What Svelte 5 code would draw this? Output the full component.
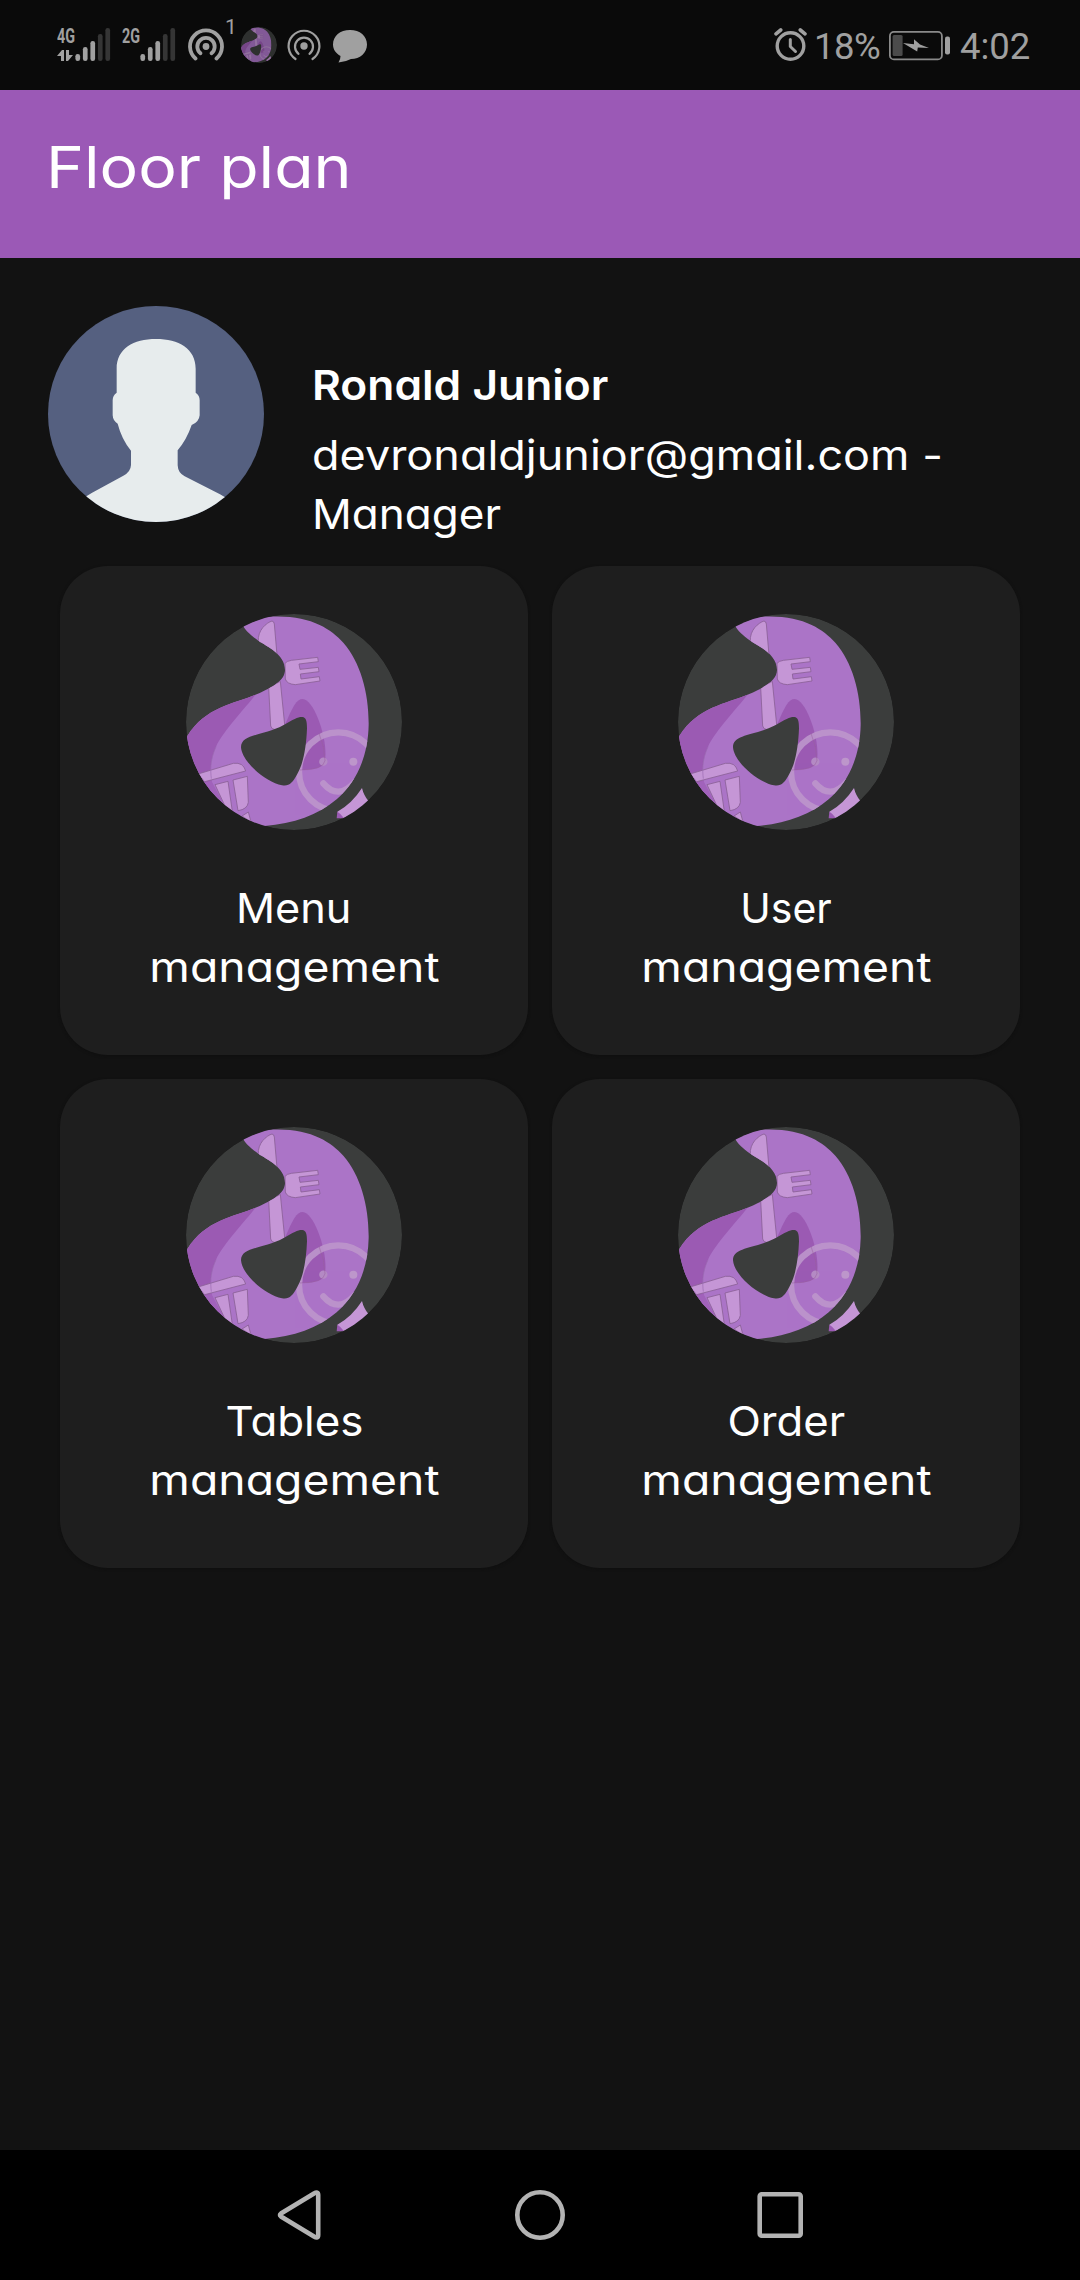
<script>
  const cards = ['Menu', 'User', 'Tables', 'Order'];
  const barHeights = [7, 14, 20, 27, 33];
</script>

{#snippet brand(id)}
  <svg class="brand" viewBox="48 42 648 648">
    <defs>
      <clipPath id="disc-{id}"><circle cx="372" cy="366" r="324" /></clipPath>
      <clipPath id="body-{id}">
        <path d="M221 80L210 30L300 50C420 44 482 86 520 128C572 188 597 280 596 375C594 470 560 545 500 598C445 645 370 672 284 678L150 700L20 560L52 408C108 320 190 313 260 283C312 260 345 240 345 210C345 163 292 140 265 122C242 106 226 90 221 80Z" />
      </clipPath>
    </defs>
    <g clip-path="url(#disc-{id})">
      <circle cx="372" cy="366" r="324" fill="#3b3d3c" />
      <g clip-path="url(#body-{id})">
        <rect x="40" y="30" width="660" height="670" fill="#ab74c7" />
        <path d="M40 400L52 280L256 285C225 325 158 395 138 440C120 480 121 510 124 536L130 600L40 600Z" fill="#9b5ab3" />
        <path d="M345 374C368 320 380 297 398 297C432 297 475 420 465 480C461 502 440 510 385 510Z" fill="#9b5ab3" />
        <g fill="#c596d6" stroke="#8a6096" stroke-width="2.5">
          <path d="M265 125C262 90 290 68 306 63Q312 64 313 72L321 165Z" />
          <path d="M296 262L331 244L344 374Q325 390 316 389Q304 388 302 378Z" />
          <path d="M345 190Q350 183 364 181L443 172L445 185L387 192L390 208L445 202L447 215L391 222L393 237L448 230L450 243L376 254Q350 252 346 237Z" />
          <path d="M84 522L190 490Q220 486 227 513L104 545Z" />
          <path d="M189 540L232 529L235 607Q232 628 204 632Z" />
          <path d="M216 648L235 636L243 666Z" />
        </g>
        <path d="M138 440C120 480 121 510 124 536" fill="none" stroke="#9a6ab0" stroke-width="2" />
        <path d="M104 548L124 542L165 618L120 590Z" fill="#a162bb" />
        <path d="M135 554L174 544L187 634L165 618Z" fill="#c596d6" stroke="#8a6096" stroke-width="2.5" />
        <g fill="none" stroke="#bd96cb" stroke-width="19" stroke-linecap="round" opacity=".9">
          <circle cx="505" cy="515" r="118" />
          <path d="M460 550Q505 602 554 546" />
        </g>
        <circle cx="460" cy="485" r="12.5" fill="#b48ac4" />
        <circle cx="550" cy="485" r="12" fill="#bd96cb" />
        <path d="M447 400Q464 440 465 482Q461 510 390 510" fill="none" stroke="#98609f" stroke-width="1.5" />
      </g>
      <path d="M213 442C213 402 278 408 340 376C372 357 385 350 397 351C408 353 411 361 411 385C409 440 400 490 383 520C368 550 356 560 336 556C288 547 216 486 213 442Z" fill="#3b3d3c" />
      <path d="M502 635Q545 612 576 564Q581 586 596 604L540 665Q508 655 502 635Z" fill="#c596d6" />
      <path d="M502 635Q510 639 522 655L500 655Z" fill="#9b5ab3" />
    </g>
  </svg>
{/snippet}

{#snippet signal(label, arrows)}
  <svg class="signal" viewBox="0 0 54 40" width="54" height="40">
    <text x="0" y="19" textLength="18" lengthAdjust="spacingAndGlyphs">{label}</text>
    {#if arrows}
      <path d="M0 32L5 26H7V37H4V32ZM9 26H12V31H16L11 37H9Z" />
    {/if}
    {#each barHeights as h, i}
      <rect class:off={i > 2} x={18.4 + i * 7.5} y={37 - h} width="4.7" height={h} rx="2.2" />
    {/each}
  </svg>
{/snippet}

<div class="screen">
  <div class="status">
    {@render signal('4G', true)}
    <div class="second">{@render signal('2G', false)}</div>
    <svg class="cast" viewBox="0 0 48 48" width="48" height="48">
      <g fill="none" stroke="#a0a0a0" stroke-width="3.8" stroke-linecap="round">
        <path d="M7.5 42.5A16 16 0 1 1 28.5 42.5" />
        <path d="M12.5 37.3A8.7 8.7 0 1 1 23.5 37.3" />
      </g>
      <circle cx="18" cy="30.5" r="3.4" />
      <text x="37" y="18" font-size="21">1</text>
    </svg>
    <div class="mini">{@render brand('status')}</div>
    <svg class="cast-thin" viewBox="0 0 34 34" width="34" height="34">
      <g fill="none" stroke="#a0a0a0" stroke-width="2.2" stroke-linecap="round">
        <path d="M8.5 30A15.4 15.4 0 1 1 25.5 30" />
        <path d="M11.5 24.8A9 9 0 1 1 22.5 24.8" />
      </g>
      <circle cx="17" cy="17" r="3.7" />
    </svg>
    <svg class="bubble" viewBox="0 0 34 33" width="34" height="33">
      <path d="M17 0C27 0 34 6 34 14.5S27 29 18 29Q13 31.8 5.5 32.5Q7.5 29.5 7.5 26C3 23.5 0 19.5 0 14.5C0 6 7 0 17 0Z" />
    </svg>
    <div class="fill"></div>
    <svg class="alarm" viewBox="0 0 34 34" width="34" height="34">
      <g fill="none" stroke="#a0a0a0" stroke-linecap="round">
        <circle cx="16.5" cy="18" r="13.3" stroke-width="3.4" />
        <path d="M2 5.8L6.7 2M31 5.8L26.3 2" stroke-width="3.6" />
        <path d="M16.3 11.5V18.5L21.5 23.5" stroke-width="3" stroke-linejoin="round" />
      </g>
    </svg>
    <span class="level">18%</span>
    <svg class="battery" viewBox="0 0 62 30" width="62" height="30">
      <rect x=".9" y=".9" width="52" height="27.5" rx="4" fill="none" stroke="#8a8a8a" stroke-width="1.8" />
      <rect x="3.6" y="4" width="10" height="21" rx="1.5" fill="#4b4b4b" />
      <path d="M14 12L25 13.2V8.3L31 13.5L40 17L28.8 16.5L28.2 20.5Z" />
      <rect x="56" y="5.5" width="5" height="18" rx="2" />
    </svg>
    <span class="clock">4:02</span>
  </div>

  <header><h1>Floor plan</h1></header>

  <main>
    <section class="profile">
      <svg class="avatar" viewBox="54 47 648 648">
        <defs><clipPath id="avatar-disc"><circle cx="378" cy="371" r="324" /></clipPath></defs>
        <g clip-path="url(#avatar-disc)">
          <rect x="54" y="47" width="648" height="648" fill="#556080" />
          <path d="M260 235C260 175 310 146 378 146S497 175 497 235V307Q509 315 509 330V375Q507 396 485 404Q470 448 443 480V525Q444 548 464 558L570 612Q600 628 610 645V700H140V645Q150 628 185 608L280 556Q302 545 303 524V481Q275 447 263 400Q249 392 248 375V330Q248 315 260 307Z" fill="#e7eced" />
        </g>
      </svg>
      <div class="who">
        <p class="name">Ronald Junior</p>
        <p class="mail">devronaldjunior@gmail.com -</p>
        <p class="role">Manager</p>
      </div>
    </section>

    <section class="grid">
      {#each cards as card}
        <article>
          {@render brand(card)}
          <p class="label {card.toLowerCase()}">{card}</p>
          <p class="label mgmt">management</p>
        </article>
      {/each}
    </section>
  </main>

  <nav>
    <svg viewBox="0 0 60 60" width="60" height="60"><path d="M11 30.5Q9 29 11 27.5L44 7.5Q48.2 5 48.2 9V49Q48.2 53 44 50.5Z" /></svg>
    <svg viewBox="0 0 60 60" width="60" height="60"><circle cx="30" cy="29" r="22.7" /></svg>
    <svg viewBox="0 0 60 60" width="60" height="60"><rect x="9.7" y="8.3" width="41" height="41.4" rx="2" /></svg>
  </nav>
</div>

<style>
  :global(body) { background: #121212; }
  svg { display: block; flex: none; }
  p, h1 { margin: 0; font-weight: 400; white-space: nowrap; }
  .screen {
    width: 1080px;
    height: 2280px;
    display: flex;
    flex-direction: column;
    background: #121212;
    color: #fff;
    font-family: Inter, "Open Sans", sans-serif;
    font-feature-settings: "cv11";
  }
  .status {
    box-sizing: border-box;
    height: 90px;
    padding: 0 51px 0 57px;
    display: flex;
    align-items: flex-start;
    background: #0a0a0a;
    color: #a0a0a0;
    fill: #a0a0a0;
    font-family: Roboto, sans-serif;
    font-feature-settings: normal;
  }
  .signal { margin-top: 24px; }
  .signal text { font: 700 21px Roboto, sans-serif; }
  .off { fill: #353535; }
  .second { margin-left: 11px; }
  .cast { margin: 16px 0 0 12px; }
  .mini { width: 36px; height: 36px; margin: 27px 0 0 5px; opacity: .75; }
  .mini .brand { width: 36px; height: 36px; }
  .cast-thin { margin: 29px 0 0 10px; }
  .bubble { margin: 30px 0 0 12px; }
  .fill { flex: 1; }
  .alarm { margin-top: 28px; }
  .level, .clock { font-size: 36.5px; line-height: 44px; margin-top: 25px; white-space: nowrap; }
  .level { width: 65px; margin-left: 6px; letter-spacing: -.5px; }
  .battery { margin: 31px 0 0 10px; }
  .clock { width: 69px; margin-left: 9px; }

  header {
    height: 168px;
    box-sizing: border-box;
    padding: 32px 46px;
    background: #9b59b6;
  }
  h1 { font-size: 58px; line-height: 90px; }

  main { flex: 1; padding: 48px 48px 0; }
  .profile { display: flex; gap: 48px; height: 260px; }
  .avatar { width: 216px; height: 216px; }
  .who { padding-top: 50px; font-size: 41px; line-height: 59px; }
  .name { font-weight: 600; margin-bottom: 11px; }

  h1, .who p { width: fit-content; transform-origin: left; }
  h1 { transform: scaleX(1.11); }
  .name { transform: scaleX(1.08); }
  .mail { transform: scaleX(1.097); }
  .role { transform: scaleX(1.075); }
  .mgmt { transform: scaleX(1.13); }
  .menu { transform: scaleX(1.055); }
  .tables { transform: scaleX(1.07); }
  .order { transform: scaleX(1.065); }

  .grid {
    display: grid;
    grid-template-columns: 468px 468px;
    grid-auto-rows: 489px;
    gap: 24px;
    padding: 0 12px;
  }
  article {
    box-sizing: border-box;
    display: flex;
    flex-direction: column;
    align-items: center;
    padding-top: 48px;
    border-radius: 48px;
    background: #1e1e1e;
    box-shadow: 0 1px 3px #0f0f0f;
  }
  .brand { width: 216px; height: 216px; }
  .label { font-size: 41px; line-height: 59px; }
  article .brand { margin-bottom: 49px; }

  nav {
    height: 130px;
    box-sizing: border-box;
    padding: 36px 270px 0;
    display: flex;
    justify-content: space-between;
    align-items: flex-start;
    background: #000;
    fill: none;
    stroke: #b3b3b3;
    stroke-width: 4.6;
  }
</style>
